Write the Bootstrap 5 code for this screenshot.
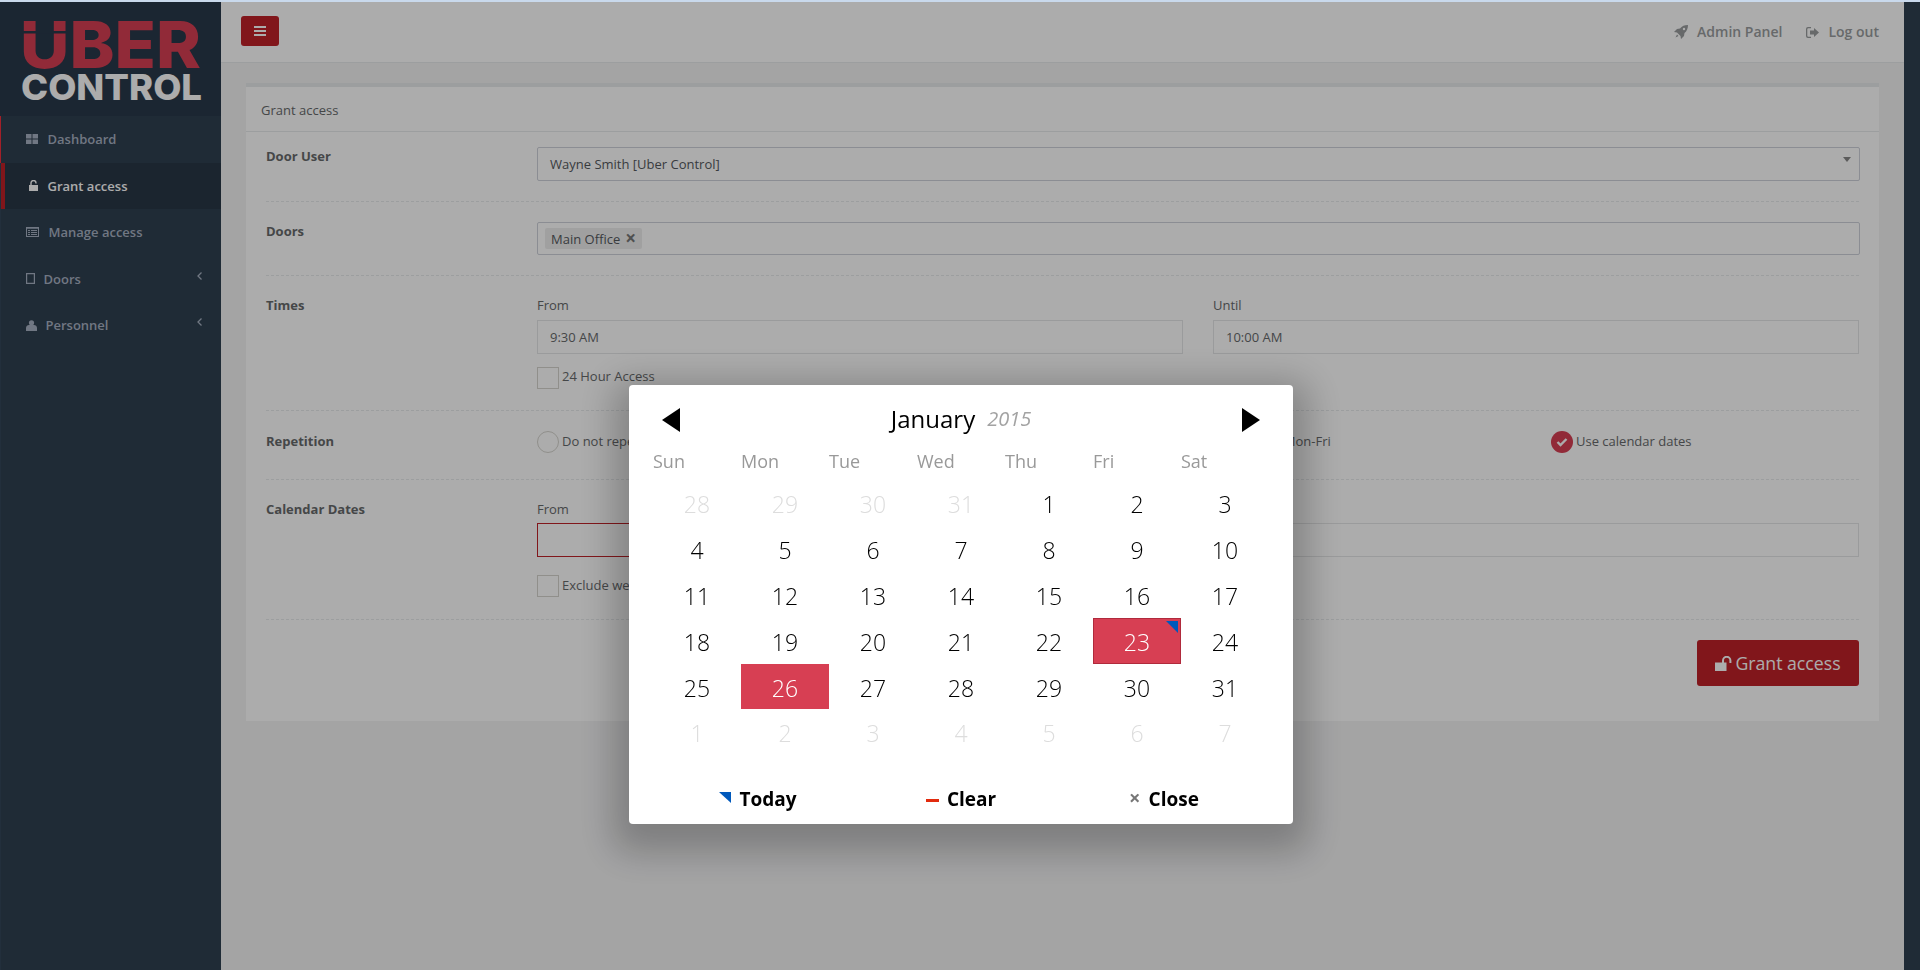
<!DOCTYPE html>
<html lang="en">
<head>
<meta charset="utf-8">
<title>Grant access</title>
<link href="https://cdn.jsdelivr.net/npm/bootstrap@5.3.0/dist/css/bootstrap.min.css" rel="stylesheet">
<style>
html,body{height:970px;overflow:hidden}
body{font-family:"Open Sans","Liberation Sans",sans-serif;font-size:13px;line-height:18px;color:#676a6c;background:#2f4050;border-top:2px solid #c9d9ec}
.uc-wrap{height:968px}
.uc-side{width:221px;flex:none;border-left:1px solid #33465a}
.uc-logo{height:114px;margin-left:-1px;background:#29394a;display:block}
.uc-logo svg{display:block}
.uc-nav{list-style:none;margin:0;padding:0}
.uc-nav a{display:flex;align-items:center;height:46.5px;padding-left:25px;color:#a7b1c2;font-weight:600;text-decoration:none}
.uc-nav svg{flex:none;fill:currentColor}
.uc-nav .ic{margin-right:9.5px}
.uc-nav .ic-n{margin-right:8.5px}
.uc-nav .first{box-shadow:inset 1px 0 0 #f0303e;margin-left:-1px;padding-left:26px}
.uc-nav .on{background:#293846;color:#fff;border-left:4px solid #bf2228;padding-left:24px}
.uc-nav .chev{margin-left:auto;margin-right:19px;margin-top:-6px;fill:none;stroke:#a7b1c2;stroke-width:1.3}
.uc-main{width:1683px;flex:none;background:#f3f3f4}
.uc-top{height:61px;background:#fff;border-bottom:1px solid #e7eaec;padding:14px 25px 0 20px}
.uc-toggle{width:38px;height:30px;padding:0;background:#bf2228;border:0;border-radius:3px;display:flex;align-items:center;justify-content:center}
.uc-link{color:#999c9e;font-weight:600;font-size:14px;text-decoration:none;display:flex;align-items:center}
.uc-link svg{fill:#999c9e;flex:none}
.uc-panel{margin:20px 25px 0;background:#fff;border-top:4px solid #e7eaec}
.uc-head{height:45px;padding:14px 15px;border-bottom:1px solid #e7eaec}
.uc-body{padding:0 20px}
.uc-row{border-bottom:1px dashed #e7eaec}
.uc-lab{width:271px;flex:none;font-weight:700}
.uc-lab-low{padding-top:1px}
.uc-fld{flex:1 1 auto;min-width:0}
.uc-input{display:block;width:100%;height:34px;border:1px solid #e5e6e7;padding:6px 12px;line-height:20px;color:#676a6c;background:#fff}
.uc-select{width:calc(100% + 1px);border-color:#ced2da;border-radius:2px;color:#55595e;position:relative}
.uc-select::after{content:"";position:absolute;right:8px;top:9px;border:4px solid transparent;border-top:5px solid #888;border-bottom:0}
.uc-multi{width:calc(100% + 1px);height:33px;padding:5px 7px;border-color:#ced2da;border-radius:2px}
.uc-chip{display:inline-flex;align-items:center;height:21px;width:97px;padding:0 6px;background:#eeeeee;border-radius:2px;color:#55595e;justify-content:space-between}
.uc-chip b{font-weight:700;color:#777;font-size:19px;line-height:15px;margin-top:-1px}
.uc-t-lab{height:24px;display:block}
.uc-t-lab2{height:23px;display:block}
.uc-err{border-color:#bf2228}
.uc-check{display:flex;align-items:flex-start;gap:3px;height:22px;white-space:nowrap;line-height:18px}
.uc-check-low{line-height:20px}
.uc-box{width:22px;height:22px;flex:none;border:1px solid #d6d5cf;background:#fff;display:block}
.uc-radio{border-radius:50%}
.uc-radio-on{border:0;background:#d73f53;display:flex;align-items:center;justify-content:center}
.uc-cols{gap:30px}
.uc-cols>div{flex:1 1 0;min-width:0}
.uc-rep{display:grid;grid-template-columns:repeat(3,338px) 1fr}
.uc-go{width:162px;height:46px;background:#bf2228;border:0;border-radius:3px;color:#fff;font-size:17.7px;line-height:24px;padding:0;display:flex;align-items:center;justify-content:center;gap:3px}
.uc-go svg{fill:#fff}
.uc-veil{position:fixed;left:0;right:0;top:2px;bottom:0;background:rgba(0,0,0,.325);display:flex;justify-content:center;align-items:flex-start;padding-top:383px;padding-left:2px}
.uc-cal{width:664px;height:439px;background:#fff;border-radius:4px;box-shadow:0 12px 36px 16px rgba(0,0,0,.24);padding:0 24px;color:#000}
.uc-cal-hd{position:relative;display:flex;justify-content:center;align-items:center;height:70px;padding-bottom:2px}
.uc-month{font-size:24px;font-weight:400;line-height:30px}
.uc-year{font-size:20px;font-style:italic;font-weight:400;color:#a3a3a3;margin-left:12px;line-height:30px}
.uc-arrow{width:0;height:0;position:absolute;top:23px;border-top:12px solid transparent;border-bottom:12px solid transparent}
.uc-prev{left:9px;border-right:18px solid #000}
.uc-next{right:9px;border-left:18px solid #000}
.uc-grid{display:grid;grid-template-columns:repeat(7,88px)}
.uc-dow{height:25px;line-height:12px;font-size:18px;font-weight:400;color:#999}
.uc-day{height:45.9px;line-height:48.5px;text-align:center;font-size:23px;font-weight:300;color:#000;position:relative}
.uc-off{color:#ddd}
.uc-sel{background:#d73f53;color:#fff}
.uc-today{outline:1px solid #b02a3c;outline-offset:-1px}
.uc-today::before{content:"";position:absolute;top:3px;right:3px;border-top:12px solid #0059bc;border-left:12px solid transparent}
.uc-foot{display:grid;grid-template-columns:repeat(3,203px);justify-content:center;margin-top:24px}
.uc-fbtn{display:flex;align-items:center;justify-content:center;font-size:19px;font-weight:700;line-height:26px;color:#000;height:40px}
.uc-tri{border-top:11px solid #0059bc;border-left:12px solid transparent;margin-right:8px;margin-bottom:4px}
.uc-dash{width:13px;height:3px;background:#e22b0e;margin-right:8px;margin-top:2px}
.uc-x{color:#777;font-size:20px;margin-right:8px;line-height:16px;margin-bottom:2px}
</style>
</head>
<body>
<div class="uc-wrap d-flex">
  <aside class="uc-side">
    <div class="uc-logo">
      <svg width="221" height="114" viewBox="0 0 221 114" role="img" aria-label="Uber Control">
        <text x="20" y="66" font-family="Inter,'Liberation Sans',sans-serif" font-weight="800" font-size="65" fill="#d73f53" textLength="181" lengthAdjust="spacingAndGlyphs">UBER</text>
        <rect x="20" y="29" width="46" height="2.500" fill="#29394a"/>
        <text x="21" y="98" font-family="Inter,'Liberation Sans',sans-serif" font-weight="800" font-size="36" fill="#fff" textLength="181" lengthAdjust="spacingAndGlyphs">CONTROL</text>
      </svg>
    </div>
    <ul class="uc-nav">
      <li><a class="first" href="#"><svg class="ic" width="12" height="10" viewBox="0 0 12 10"><rect width="5.500" height="4.500"/><rect x="6.500" width="5.500" height="4.500"/><rect y="5.500" width="5.500" height="4.500"/><rect x="6.500" y="5.500" width="5.500" height="4.500"/></svg>Dashboard</a></li>
      <li><a class="on" href="#"><svg class="ic" width="9" height="11" viewBox="0 0 9 11" ><path d="M0 5h9v6H0z"/><path d="M2 5V3a2.500 2.500 0 0 1 5 0v.6" fill="none" stroke="#fff" stroke-width="1.400"/></svg>Grant access</a></li>
      <li><a href="#"><svg class="ic" width="13" height="10" viewBox="0 0 13 10"><path d="M0 0h13v10H0zM1 1.800v7.200h11V1.800z" fill-rule="evenodd"/><path d="M2 3h2v1H2zM5 3h6v1H5zM2 5h2v1H2zM5 5h6v1H5zM2 7h2v1H2zM5 7h6v1H5z"/></svg>Manage access</a></li>
      <li><a href="#"><svg class="ic-n" width="9" height="11" viewBox="0 0 9 11"><path d="M0 0h9v11H0zM1.200 1.200v8.600h6.600V1.200z" fill-rule="evenodd"/></svg>Doors<svg class="chev" width="5" height="8" viewBox="0 0 5 8"><path d="M4.500.5 1 4l3.500 3.500"/></svg></a></li>
      <li><a href="#"><svg class="ic-n" width="11" height="11" viewBox="0 0 11 11"><circle cx="5.500" cy="2.800" r="2.600"/><path d="M0 11V8c0-1.800 1.500-3 3-3h5c1.500 0 3 1.200 3 3v3z"/></svg>Personnel<svg class="chev" width="5" height="8" viewBox="0 0 5 8"><path d="M4.500.5 1 4l3.500 3.500"/></svg></a></li>
    </ul>
  </aside>
  <main class="uc-main">
    <div class="uc-top d-flex justify-content-between">
      <button class="uc-toggle" type="button" aria-label="Menu"><svg width="12" height="10" viewBox="0 0 12 10" fill="#fff"><rect width="12" height="2"/><rect y="4" width="12" height="2"/><rect y="8" width="12" height="2"/></svg></button>
      <div class="d-flex align-items-start" style="gap:24px;padding-top:7px">
        <a class="uc-link" href="#"><svg width="14" height="14" viewBox="0 0 14 14" style="margin-right:9px"><path d="M14 0c-3.600.1-6 1-8 3.500L3 4 0 7l3 .5L6.500 11l.5 3 3-3 .5-3C13 6 13.900 3.600 14 0zM10 2.800a1.200 1.200 0 1 1 0 2.400 1.200 1.200 0 0 1 0-2.400zM3 9.500 1.500 12.500 4.500 11z"/></svg>Admin Panel</a>
        <a class="uc-link" href="#"><svg width="13" height="11" viewBox="0 0 13 11" style="margin-right:9px"><path d="M5 0H2a2 2 0 0 0-2 2v7a2 2 0 0 0 2 2h3V9.800H2.300A1 1 0 0 1 1.300 8.800V2.200a1 1 0 0 1 1-1H5z"/><path d="M8 1l5 4.500L8 10V7.500H4v-4h4z"/></svg>Log out</a>
      </div>
    </div>
    <section class="uc-panel">
      <div class="uc-head">Grant access</div>
      <div class="uc-body">
        <div class="uc-row d-flex" style="padding:15px 0 20px">
          <div class="uc-lab">Door User</div>
          <div class="uc-fld"><div class="uc-input uc-select">Wayne Smith [Uber Control]</div></div>
        </div>
        <div class="uc-row d-flex" style="padding:20px 0">
          <div class="uc-lab">Doors</div>
          <div class="uc-fld"><div class="uc-input uc-multi"><span class="uc-chip">Main Office <b>×</b></span></div></div>
        </div>
        <div class="uc-row d-flex" style="padding:20px 0 21px">
          <div class="uc-lab">Times</div>
          <div class="uc-fld">
            <div class="d-flex uc-cols">
              <div><span class="uc-t-lab">From</span><div class="uc-input">9:30 AM</div></div>
              <div><span class="uc-t-lab">Until</span><div class="uc-input">10:00 AM</div></div>
            </div>
            <div class="uc-check" style="margin-top:13px"><span class="uc-box"></span>24 Hour Access</div>
          </div>
        </div>
        <div class="uc-row d-flex" style="padding:20px 0 26px">
          <div class="uc-lab uc-lab-low">Repetition</div>
          <div class="uc-fld uc-rep">
            <div class="uc-check uc-check-low"><span class="uc-box uc-radio"></span>Do not repeat</div>
            <div class="uc-check uc-check-low"><span class="uc-box uc-radio"></span></div>
            <div class="uc-check uc-check-low"><span class="uc-box uc-radio"></span>Repeat Mon-Fri</div>
            <div class="uc-check uc-check-low"><span class="uc-box uc-radio uc-radio-on"><svg width="12" height="10" viewBox="0 0 12 10" fill="none" stroke="#fff" stroke-width="2.400"><path d="M1.500 5 4.500 8l6-6"/></svg></span>Use calendar dates</div>
          </div>
        </div>
        <div class="uc-row d-flex" style="padding:20px 0 22px">
          <div class="uc-lab">Calendar Dates</div>
          <div class="uc-fld">
            <div class="d-flex uc-cols">
              <div><span class="uc-t-lab2">From</span><div class="uc-input uc-err"></div></div>
              <div><span class="uc-t-lab2">&nbsp;</span><div class="uc-input"></div></div>
            </div>
            <div class="uc-check uc-check-low" style="margin-top:18px"><span class="uc-box"></span>Exclude weekends</div>
          </div>
        </div>
        <div class="d-flex justify-content-end" style="padding:20px 0 35px">
          <button class="uc-go" type="button"><svg width="17" height="15" viewBox="0 0 17 15"><path d="M0 6.500h11.500V15H0z"/><path d="M8 7V4.500a3.700 3.700 0 0 1 7.400 0V7" fill="none" stroke="#fff" stroke-width="2"/></svg>Grant access</button>
        </div>
      </div>
    </section>
  </main>
</div>

<div class="uc-veil">
  <div class="uc-cal">
    <div class="uc-cal-hd">
      <span class="uc-arrow uc-prev"></span>
      <span class="uc-month">January</span><span class="uc-year">2015</span>
      <span class="uc-arrow uc-next"></span>
    </div>
    <div class="uc-grid">
      <div class="uc-dow">Sun</div><div class="uc-dow">Mon</div><div class="uc-dow">Tue</div><div class="uc-dow">Wed</div><div class="uc-dow">Thu</div><div class="uc-dow">Fri</div><div class="uc-dow">Sat</div>
      <div class="uc-day uc-off">28</div><div class="uc-day uc-off">29</div><div class="uc-day uc-off">30</div><div class="uc-day uc-off">31</div><div class="uc-day">1</div><div class="uc-day">2</div><div class="uc-day">3</div>
      <div class="uc-day">4</div><div class="uc-day">5</div><div class="uc-day">6</div><div class="uc-day">7</div><div class="uc-day">8</div><div class="uc-day">9</div><div class="uc-day">10</div>
      <div class="uc-day">11</div><div class="uc-day">12</div><div class="uc-day">13</div><div class="uc-day">14</div><div class="uc-day">15</div><div class="uc-day">16</div><div class="uc-day">17</div>
      <div class="uc-day">18</div><div class="uc-day">19</div><div class="uc-day">20</div><div class="uc-day">21</div><div class="uc-day">22</div><div class="uc-day uc-sel uc-today">23</div><div class="uc-day">24</div>
      <div class="uc-day">25</div><div class="uc-day uc-sel">26</div><div class="uc-day">27</div><div class="uc-day">28</div><div class="uc-day">29</div><div class="uc-day">30</div><div class="uc-day">31</div>
      <div class="uc-day uc-off">1</div><div class="uc-day uc-off">2</div><div class="uc-day uc-off">3</div><div class="uc-day uc-off">4</div><div class="uc-day uc-off">5</div><div class="uc-day uc-off">6</div><div class="uc-day uc-off">7</div>
    </div>
    <div class="uc-foot">
      <div class="uc-fbtn"><span class="uc-tri"></span>Today</div>
      <div class="uc-fbtn"><span class="uc-dash"></span>Clear</div>
      <div class="uc-fbtn"><span class="uc-x">×</span>Close</div>
    </div>
  </div>
</div>
<script src="https://cdn.jsdelivr.net/npm/bootstrap@5.3.0/dist/js/bootstrap.bundle.min.js"></script>
</body>
</html>
